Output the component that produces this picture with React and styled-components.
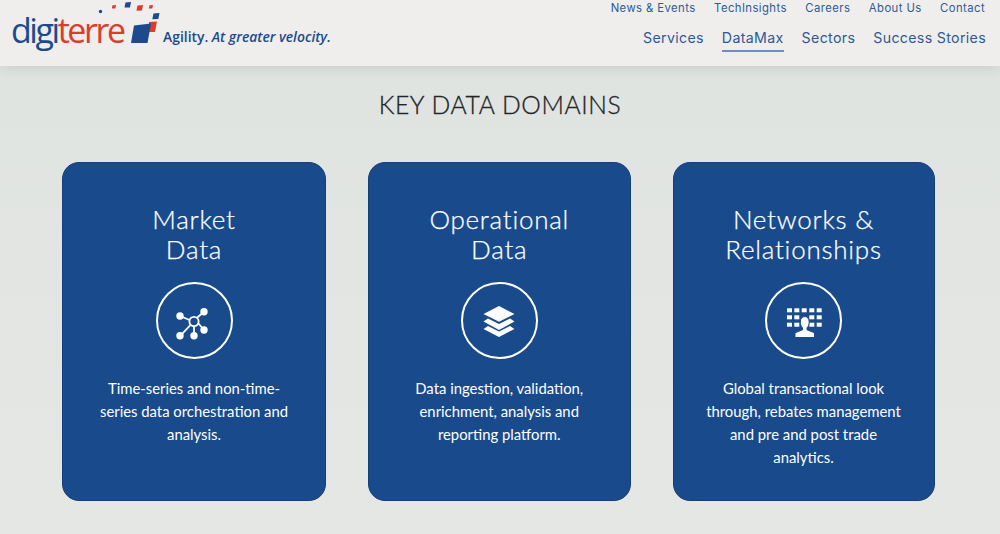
import React from "react";
import styled, { createGlobalStyle } from "styled-components";

const Global = createGlobalStyle`
  html, body { margin: 0; padding: 0; }
  body { background: #e3e6e4; font-family: Lato, "Liberation Sans", sans-serif; overflow: hidden; }
  * { box-sizing: border-box; }
`;
const Page = styled.div`
  width: 1000px; height: 534px; overflow: hidden;
  background: linear-gradient(180deg, #dfe3e0 0%, #e5e7e5 100%);
`;
const Header = styled.header`
  height: 66px; background: #efeeec; display: flex; justify-content: space-between;
  padding: 0 14px 0 12px; box-shadow: 0 2px 12px rgba(0,0,0,.1);
`;
const Brand = styled.div`display: flex; align-items: flex-start;`;
const Tagline = styled.div`
  margin: 27px 0 0 1px; font: 600 13.9px/20px "Open Sans", sans-serif; color: #1b4b8c; white-space: nowrap;
  em { font-style: italic; }
`;
const Nav = styled.nav`display: flex; flex-direction: column; align-items: flex-end;`;
const TopLinks = styled.div`display: flex; gap: 18.5px; padding: 1px 1px 0 0; height: 24px;`;
const TopLink = styled.a`
  font: 400 11.3px/15px Inter, sans-serif; letter-spacing: .42px; color: #305a95; white-space: nowrap;
`;
const MainLinks = styled.div`display: flex; gap: 18px; padding-top: 3px;`;
const MainLink = styled.a`
  font: 400 14.2px/22px Inter, sans-serif; letter-spacing: .33px; color: #2f5995; white-space: nowrap;
  padding-bottom: 1px; border-bottom: 2px solid ${p => (p.$active ? "#6f8fbd" : "transparent")};
`;
const Heading = styled.h1`
  margin: 0; padding-top: 24px; height: 96px; text-align: center;
  font: 300 24.7px/30px Lato, sans-serif; letter-spacing: .6px; color: #222526; -webkit-text-stroke: .3px #222526;
`;
const Cards = styled.section`
  display: grid; grid-template-columns: 264px 263.5px 262px; gap: 41.5px; padding-left: 62px;
`;
const Card = styled.article`
  height: 339px; background: #194b8c; border: 1px solid #14407a; border-radius: 17px; color: #fff;
  display: flex; flex-direction: column; align-items: center; padding-top: 41px;
`;
const Title = styled.h2`
  margin: 0; height: 60px; text-align: center; font: 300 26px/30px Lato, sans-serif; letter-spacing: .75px; white-space: pre-line;
  -webkit-text-stroke: .25px #fff;
`;
const Circle = styled.div`
  width: 77px; height: 77px; margin-top: 18px; border: 2px solid #fff; border-radius: 50%;
  display: flex; align-items: center; justify-content: center;
`;
const Text = styled.p`
  margin: 18px 0 0; width: 220px; text-align: center; font: 400 14.85px/23px Lato, sans-serif; white-space: pre-line;
`;

const Logo = () => (
  <svg width="150" height="60" viewBox="0 0 150 60" style={{ display: "block", overflow: "visible" }}>
    <text x="-1" y="43" fontFamily="Open Sans" fontWeight="500" fontSize="34" textLength="115" lengthAdjust="spacing" fill="#1b4b8c">digi<tspan fill="#dc3d2a">terre</tspan></text>
    <path d="M137 22l8-.5-2 10.500-6 0z" fill="#dc3d2a" />
    <path d="M122 25.500l17-2L135.500 43 119 43z" fill="#1b4b8c" />
    <path d="M141.500 13.500l6-.5-1.200 6-6 .3z" fill="#1b4b8c" />
    <path d="M113.500 2.500l5.500-.5-1 5.500-5.500 0z" fill="#1b4b8c" />
    <path d="M125.500 5.500l5.500-.5-1 5.500-5.500.3z" fill="#dc3d2a" />
    <path d="M100.500 5.300l3.500-.3-.7 3.500-3.500 0z" fill="#dc3d2a" />
    <path d="M137.500 5.300l3.500-.3-.7 3.500-3.500 0z" fill="#dc3d2a" />
    <circle cx="88.500" cy="11.500" r="1.700" fill="#1b4b8c" />
  </svg>
);

const NetworkIcon = () => (
  <svg width="40" height="40" viewBox="0 0 40 40" fill="#fff" stroke="#fff">
    <g strokeWidth="1.800" fill="none">
      <circle cx="20" cy="20.500" r="4.600" />
      <path d="M6 15l9.500 4M30 10.700l-7 6M16.500 24l-10 10.700M20 25v9.700M24.500 22.500l5.500 6.500" />
    </g>
    <circle cx="6" cy="15" r="3.700" stroke="none" />
    <circle cx="30" cy="10.700" r="3.700" stroke="none" />
    <circle cx="6" cy="34.700" r="3.700" stroke="none" />
    <circle cx="20" cy="34.700" r="3.700" stroke="none" />
    <circle cx="30" cy="29" r="3.700" stroke="none" />
  </svg>
);
const LayersIcon = () => (
  <svg width="40" height="40" viewBox="0 0 40 40" fill="#fff">
    <path d="M20 5L35.500 13 20 20.700 4.500 13z" />
    <path d="M9 17.500L20 23l11-5.500 4.500 3L20 29 4.500 20.500z" />
    <path d="M9 25l11 5.500L31 25l4.500 3L20 36 4.500 28z" />
  </svg>
);
const PeopleGridIcon = () => {
  const xs = [3, 10.3, 17.7, 25.3, 32.7];
  const ys = [7.3, 14.3, 21.7];
  return (
    <svg width="40" height="40" viewBox="0 0 40 40" fill="#fff">
      {ys.map((y, r) => xs.map((x, c) => (r > 0 && c === 2 ? null : <rect key={`${r}-${c}`} x={x} y={y} width="5" height="4" />)))}
      <path d="M20.500 15.500c3 0 4.700 2.300 4.700 5.500 0 2.500-1 4.700-2.200 5.800v2l7.500 3v4.700H11v-4.700l7.500-3v-2c-1.200-1.100-2.200-3.300-2.200-5.800 0-3.200 1.700-5.500 4.700-5.500z" stroke="#194b8c" strokeWidth="1" />
    </svg>
  );
};

const data = [
  { title: "Market\nData", Icon: NetworkIcon, text: "Time-series and non-time-\nseries data orchestration and\nanalysis." },
  { title: "Operational\nData", Icon: LayersIcon, text: "Data ingestion, validation,\nenrichment, analysis and\nreporting platform." },
  { title: "Networks &\nRelationships", Icon: PeopleGridIcon, text: "Global transactional look\nthrough, rebates management\nand pre and post trade\nanalytics." },
];

export default function App() {
  return (
    <Page>
      <Global />
      <Header>
        <Brand>
          <Logo />
          <Tagline>Agility. <em>At greater velocity.</em></Tagline>
        </Brand>
        <Nav>
          <TopLinks>
            {["News & Events", "TechInsights", "Careers", "About Us", "Contact"].map(l => <TopLink key={l}>{l}</TopLink>)}
          </TopLinks>
          <MainLinks>
            {["Services", "DataMax", "Sectors", "Success Stories"].map(l => <MainLink key={l} $active={l === "DataMax"}>{l}</MainLink>)}
          </MainLinks>
        </Nav>
      </Header>
      <Heading>KEY DATA DOMAINS</Heading>
      <Cards>
        {data.map(({ title, Icon, text }) => (
          <Card key={title}>
            <Title>{title}</Title>
            <Circle><Icon /></Circle>
            <Text>{text}</Text>
          </Card>
        ))}
      </Cards>
    </Page>
  );
}
